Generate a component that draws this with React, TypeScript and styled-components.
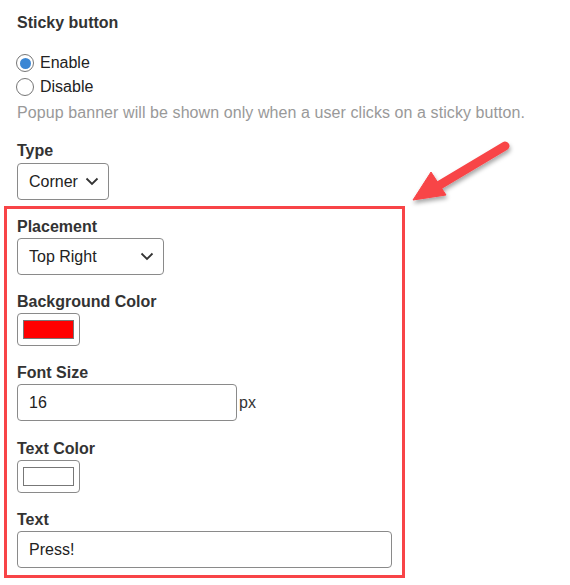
import React from "react";
import styled, { createGlobalStyle } from "styled-components";

const Global = createGlobalStyle`
  html, body { margin: 0; padding: 0; background: #fff; }
  body { font-family: "Liberation Sans", Arial, sans-serif; color: #333; }
`;

const Page = styled.div`
  position: relative;
  width: 570px;
  height: 585px;
  padding: 14px 0 0 4px;
  box-sizing: border-box;
`;

const Section = styled.div`
  padding-left: 13px;
`;

const Heading = styled.div`
  font-size: 16px;
  font-weight: bold;
  line-height: 18px;
  color: #333;
`;

const RadioGroup = styled.div`
  margin-top: 19px;
  display: flex;
  flex-direction: column;
`;

const RadioRow = styled.label`
  display: flex;
  align-items: center;
  height: 24px;
  gap: 6px;
  font-size: 16px;
  color: #222;
`;

const RadioCircle = styled.span<{ $checked?: boolean }>`
  width: 16px;
  height: 16px;
  border-radius: 50%;
  border: 1px solid #767676;
  background: #fff;
  margin-left: -1px;
  display: flex;
  align-items: center;
  justify-content: center;
  &::after {
    content: "";
    display: ${(p) => (p.$checked ? "block" : "none")};
    width: 11px;
    height: 11px;
    border-radius: 50%;
    background: #3a86d4;
  }
`;

const Help = styled.div`
  margin-top: 5px;
  font-size: 16px;
  line-height: 18px;
  letter-spacing: 0.08px;
  color: #999;
`;

const Label = styled.div<{ $gap?: number }>`
  font-size: 16px;
  font-weight: bold;
  line-height: 18px;
  color: #333;
  margin-bottom: ${(p) => p.$gap ?? 2}px;
`;

const Field = styled.div<{ $mt?: number }>`
  margin-top: ${(p) => p.$mt ?? 0}px;
`;

const SelectBox = styled.div<{ $w: number }>`
  width: ${(p) => p.$w}px;
  height: 37px;
  box-sizing: border-box;
  border: 1px solid #8a8a8a;
  border-radius: 4px;
  display: flex;
  align-items: center;
  justify-content: space-between;
  padding: 0 9px 0 11px;
  font-size: 16px;
  color: #222;
  background: #fff;
`;

const ColorBox = styled.div`
  width: 63px;
  height: 33px;
  box-sizing: border-box;
  border: 1px solid #8a8a8a;
  border-radius: 4px;
  display: flex;
  align-items: center;
  justify-content: center;
  background: #fff;
`;

const Swatch = styled.div<{ $color: string }>`
  width: 51px;
  height: 19px;
  box-sizing: border-box;
  border: 1px solid #777;
  background: ${(p) => p.$color};
`;

const InputRow = styled.div`
  display: flex;
  align-items: center;
  gap: 2px;
`;

const TextInput = styled.div<{ $w: number }>`
  width: ${(p) => p.$w}px;
  height: 37px;
  box-sizing: border-box;
  border: 1px solid #8a8a8a;
  border-radius: 4px;
  display: flex;
  align-items: center;
  padding: 0 11px;
  font-size: 16px;
  color: #222;
  background: #fff;
`;

const Unit = styled.span`
  font-size: 16px;
  color: #333;
`;

const Highlight = styled.div`
  margin-top: 6px;
  width: 401px;
  box-sizing: border-box;
  border: 3px solid #f84447;
  padding: 9px 10px 7px 10px;
`;

const Arrow = styled.svg`
  position: absolute;
  left: 400px;
  top: 130px;
  overflow: visible;
`;

const Chevron = () => (
  <svg width="14" height="9" viewBox="0 0 14 9">
    <path d="M1.5 1.5 L7 7 L12.5 1.5" fill="none" stroke="#333" strokeWidth="1.8" />
  </svg>
);

export default function App() {
  return (
    <>
      <Global />
      <Page>
        <Section>
          <Heading>Sticky button</Heading>
          <RadioGroup>
            <RadioRow>
              <RadioCircle $checked />
              Enable
            </RadioRow>
            <RadioRow>
              <RadioCircle />
              Disable
            </RadioRow>
          </RadioGroup>
          <Help>Popup banner will be shown only when a user clicks on a sticky button.</Help>
          <Field $mt={20}>
            <Label $gap={3}>Type</Label>
            <SelectBox $w={92}>
              Corner
              <Chevron />
            </SelectBox>
          </Field>
        </Section>
        <Highlight>
          <Field>
            <Label>Placement</Label>
            <SelectBox $w={147}>
              Top Right
              <Chevron />
            </SelectBox>
          </Field>
          <Field $mt={18}>
            <Label>Background Color</Label>
            <ColorBox>
              <Swatch $color="#ff0000" />
            </ColorBox>
          </Field>
          <Field $mt={18}>
            <Label>Font Size</Label>
            <InputRow>
              <TextInput $w={220}>16</TextInput>
              <Unit>px</Unit>
            </InputRow>
          </Field>
          <Field $mt={19}>
            <Label>Text Color</Label>
            <ColorBox>
              <Swatch $color="#ffffff" />
            </ColorBox>
          </Field>
          <Field $mt={18}>
            <Label>Text</Label>
            <TextInput $w={375}>Press!</TextInput>
          </Field>
        </Highlight>
        <Arrow width="120" height="80" viewBox="0 0 120 80">
          <defs>
            <filter id="sh" x="-30%" y="-30%" width="160%" height="160%">
              <feDropShadow dx="1" dy="3" stdDeviation="2" floodColor="#000" floodOpacity="0.35" />
            </filter>
          </defs>
          <g filter="url(#sh)" fill="#f84447" stroke="#f84447">
            <line x1="105" y1="16" x2="38" y2="56" strokeWidth="9" strokeLinecap="round" />
            <polygon points="13,70 31,42 46,65" strokeWidth="1" strokeLinejoin="round" />
          </g>
        </Arrow>
      </Page>
    </>
  );
}
